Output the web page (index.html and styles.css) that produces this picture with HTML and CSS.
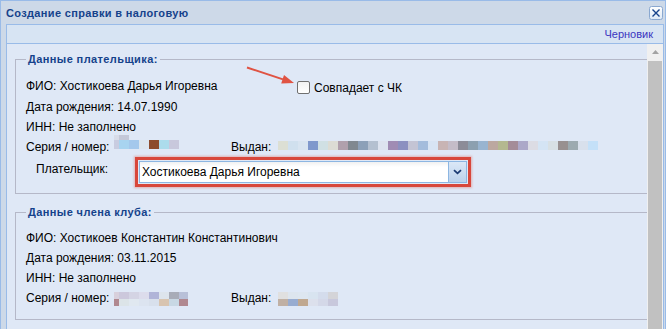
FILE: index.html
```html
<!DOCTYPE html>
<html lang="ru">
<head>
<meta charset="utf-8">
<title>Создание справки в налоговую</title>
<link rel="stylesheet" href="styles.css">
</head>
<body>
<div class="window">
  <div class="header">
    <span class="title">Создание справки в налоговую</span>
    <svg class="close" width="14" height="14" viewBox="0 0 14 14">
      <defs>
        <linearGradient id="cg" x1="0" y1="0" x2="0" y2="1">
          <stop offset="0" stop-color="#ffffff"/>
          <stop offset="1" stop-color="#dce8f6"/>
        </linearGradient>
      </defs>
      <rect x="0.5" y="0.5" width="13" height="13" rx="2" fill="url(#cg)" stroke="#8aa8d0"/>
      <path d="M3.5 3.5 L10.5 10.5 M10.5 3.5 L3.5 10.5" stroke="#15428b" stroke-width="1.4" fill="none"/>
    </svg>
  </div>
  <div class="panel">
    <div class="toolbar"><span class="status">Черновик</span></div>
    <div class="body">
      <div class="content">
        <fieldset class="group group-payer">
          <legend>Данные плательщика:</legend>
          <div class="row row-first">
            <span class="fio">ФИО: Хостикоева Дарья Игоревна</span>
            <label class="check"><span class="box"></span><span class="check-text">Совпадает с ЧК</span></label>
          </div>
          <div class="row">Дата рождения: 14.07.1990</div>
          <div class="row">ИНН: Не заполнено</div>
          <div class="row row-doc">
            <span class="doc-num"><span class="doc-label">Серия / номер:</span><span class="blob blob-p-num"></span></span>
            <span class="issued-label">Выдан:</span><span class="blob blob-p-issued"></span>
          </div>
          <div class="row row-payer">
            <span class="payer-label">Плательщик:</span>
            <div class="highlight">
              <div class="combo">
                <span class="combo-text">Хостикоева Дарья Игоревна</span>
                <span class="trigger">
                  <svg width="9" height="6" viewBox="0 0 9 6"><path d="M1 1.2 L4.5 4.4 L8 1.2" stroke="#1b3a73" stroke-width="1.8" fill="none"/></svg>
                </span>
              </div>
            </div>
          </div>
        </fieldset>
        <fieldset class="group group-member">
          <legend>Данные члена клуба:</legend>
          <div class="row">ФИО: Хостикоев Константин Константинович</div>
          <div class="row">Дата рождения: 03.11.2015</div>
          <div class="row">ИНН: Не заполнено</div>
          <div class="row row-doc">
            <span class="doc-num"><span class="doc-label">Серия / номер:</span><span class="blob blob-m-num"></span></span>
            <span class="issued-label">Выдан:</span><span class="blob blob-m-issued"></span>
          </div>
        </fieldset>
      </div>
      <div class="scrollbar">
        <div class="sb-up"><svg width="7" height="4" viewBox="0 0 7 4"><path d="M0 4 L3.5 0 L7 4 Z" fill="#a3a3a3"/></svg></div>
        <div class="sb-thumb"></div>
      </div>
    </div>
  </div>
  <svg class="annot-arrow" width="60" height="30" viewBox="0 0 60 30">
    <line x1="7" y1="7.5" x2="43" y2="19.4" stroke="#e05343" stroke-width="2"/>
    <polygon points="54,23 41.2,23.5 44,15" fill="#e05343"/>
  </svg>
</div>
</body>
</html>
```
FILE: styles.css
```css
html, body {
  margin: 0;
  padding: 0;
  background: #ffffff;
}

body {
  font-family: "Liberation Sans", Arial, sans-serif;
  font-size: 12px;
  color: #000;
}

.window {
  position: relative;
  box-sizing: border-box;
  width: 666px;
  height: 329px;
  border: 1px solid #99bbe8;
  border-bottom: none;
  padding: 0 1px 0 5px;
  background: #cdd9e8;
  overflow: hidden;
  display: flex;
  flex-direction: column;
}

.header {
  height: 23px;
  flex: none;
  display: flex;
  align-items: center;
  justify-content: space-between;
}

.title {
  font-weight: bold;
  font-size: 11px;
  letter-spacing: 0.35px;
  line-height: 16px;
  color: #15428b;
}

.close {
  display: block;
  margin-right: 1px;
  margin-top: 1px;
}

.panel {
  flex: 1;
  min-height: 0;
  border: 1px solid #99bbe8;
  border-bottom: none;
  display: flex;
  flex-direction: column;
}

.toolbar {
  height: 18px;
  flex: none;
  border-bottom: 1px solid #99bbe8;
  background: #d7e4f3;
  display: flex;
  justify-content: flex-end;
  align-items: center;
  padding-right: 10px;
}

.status {
  font-size: 11px;
  line-height: 14px;
  color: #3a35c0;
}

.body {
  flex: 1;
  min-height: 0;
  display: flex;
  background: #dfe8f6;
}

.content {
  flex: 1;
  min-width: 0;
  overflow: hidden;
  padding: 7px 0 0 8px;
}

.group {
  margin: 0 -20px 0 0;
  border: 1px solid #b5b8c8;
  padding: 8px 10px 6px 10px;
  min-width: 0;
}

.group legend {
  padding: 0 2px;
  font-weight: bold;
  font-size: 11px;
  letter-spacing: 0.4px;
  line-height: 16px;
  color: #15428b;
}

.group-member {
  margin-top: 10px;
  padding-bottom: 11px;
}

.row {
  height: 20px;
  line-height: 20px;
  display: flex;
  align-items: flex-start;
  white-space: nowrap;
}

.row-first {
  height: 22px;
}

.fio {
  width: 271px;
  line-height: 22px;
}

.check {
  display: flex;
  align-items: flex-start;
  margin-top: 6px;
}

.box {
  box-sizing: border-box;
  width: 13px;
  height: 13px;
  border: 1px solid #707070;
  border-radius: 2px;
  background: linear-gradient(#f2f2f2, #ffffff);
  margin-right: 4px;
}

.check-text {
  line-height: 13px;
  padding-top: 1px;
}

.doc-num {
  width: 205px;
  display: flex;
  align-items: flex-start;
}

.doc-label {
  width: 88px;
}

.issued-label {
  width: 47px;
}

.blob {
  display: block;
  flex: none;
}

.blob-p-num {
  width: 65px;
  height: 14px;
  margin-top: -2px;
  background:
    linear-gradient(to right, #d8dce8 0 5px, #c4c8d8 5px 15px, transparent 15px) top left / 100% 5px no-repeat,
    linear-gradient(to right, #c8cce0 0 5px, #a8d4f0 5px 15px, #a4c8ec 15px 25px, #dce6ee 25px 35px, #8c4c2c 35px 45px, #acdcec 45px 55px, #c8c8dc 55px 65px) bottom left / 100% 9px no-repeat;
}

.blob-p-issued {
  width: 320px;
  height: 9px;
  margin-top: 4px;
  background: linear-gradient(to right,
    #dcdfd4 0 10px, #d0e0ee 10px 20px, #d8e4f0 20px 30px, #7f98cc 30px 40px,
    #d0e0e4 40px 50px, #dcdcd4 50px 60px, #b0a0ac 60px 70px, #808890 70px 80px,
    #8ca0b8 80px 90px, #b4c0d0 90px 100px, #dde3ef 100px 110px, #a08cb4 110px 120px,
    #8c90c0 120px 130px, #c4c4d4 130px 140px, #a4bcdc 140px 150px, #d8e4f4 150px 160px,
    #c8b4b4 160px 170px, #c4bcc8 170px 180px, #8c8c98 180px 190px, #8ca0b0 190px 200px,
    #98b4d0 200px 210px, #bca8a0 210px 220px, #b4b890 220px 230px, #a48c98 230px 240px,
    #aca8c8 240px 250px, #dcdce4 250px 260px, #d4e4f4 260px 270px, #d8e0e4 270px 280px,
    #989090 280px 290px, #9caab0 290px 300px, #d8e0ec 300px 310px, #c4e0f8 310px 320px);
}

.blob-m-num {
  width: 74px;
  height: 14px;
  margin-top: 4px;
  background:
    linear-gradient(to right, #d8d0dc 0 5px, #ccc8dc 5px 15px, #d4d4e4 15px 25px, #dcdcec 25px 35px, #b0b4d8 35px 45px, #dde4ec 45px 55px, #a8acb8 55px 65px, #b8c0d8 65px 74px) top left / 100% 7px no-repeat,
    linear-gradient(to right, #b08890 0 5px, #dce4e8 5px 15px, #e0e8f0 15px 25px, #dce4f0 25px 35px, #d8e0ec 35px 45px, #d8c4b0 45px 55px, #c8d8e4 55px 65px, #b08890 65px 74px) bottom left / 100% 7px no-repeat;
}

.blob-m-issued {
  width: 60px;
  height: 14px;
  margin-top: 4px;
  background:
    linear-gradient(to right, #e0e0e0 0 10px, #dde5ee 10px 20px, #dde6f0 20px 30px, #d8e4f0 30px 40px, #d4dcec 40px 50px, #d4d4d8 50px 60px) top left / 100% 7px no-repeat,
    linear-gradient(to right, #c0b0a4 0 10px, #98acd0 10px 20px, #c0a890 20px 30px, #dce0ec 30px 40px, #d4d8e8 40px 50px, #c8c8dc 50px 60px) bottom left / 100% 7px no-repeat;
}

.row-payer {
  height: 30px;
}

.payer-label {
  width: 99px;
  margin-left: 10px;
  padding-top: 2px;
}

.highlight {
  width: 336px;
  box-sizing: border-box;
  border: 3px solid #d8473b;
  padding: 1px;
  box-shadow: 0 0 2px 1px rgba(224, 110, 100, 0.45);
}

.combo {
  height: 22px;
  box-sizing: border-box;
  border: 1px solid #8db6e2;
  display: flex;
  background: linear-gradient(#f1f1f1 0, #ffffff 5px);
}

.combo-text {
  flex: 1;
  line-height: 20px;
  padding-left: 2px;
  color: #000;
}

.trigger {
  width: 18px;
  box-sizing: border-box;
  border-left: 1px solid #8db6e2;
  background: linear-gradient(#dbe8f7, #bcd2ec);
  display: flex;
  align-items: center;
  justify-content: center;
}

.trigger svg {
  display: block;
}

.scrollbar {
  width: 16px;
  flex: none;
  display: flex;
  flex-direction: column;
  background: #f0f0f0;
}

.sb-up {
  height: 16px;
  display: flex;
  align-items: center;
  justify-content: center;
  padding-left: 1px;
}

.sb-up svg {
  display: block;
}

.sb-thumb {
  flex: 1;
  margin: 1px 1px 0 1px;
  background: #c1c1c1;
}

.annot-arrow {
  position: absolute;
  left: 239px;
  top: 59px;
  pointer-events: none;
}
```
